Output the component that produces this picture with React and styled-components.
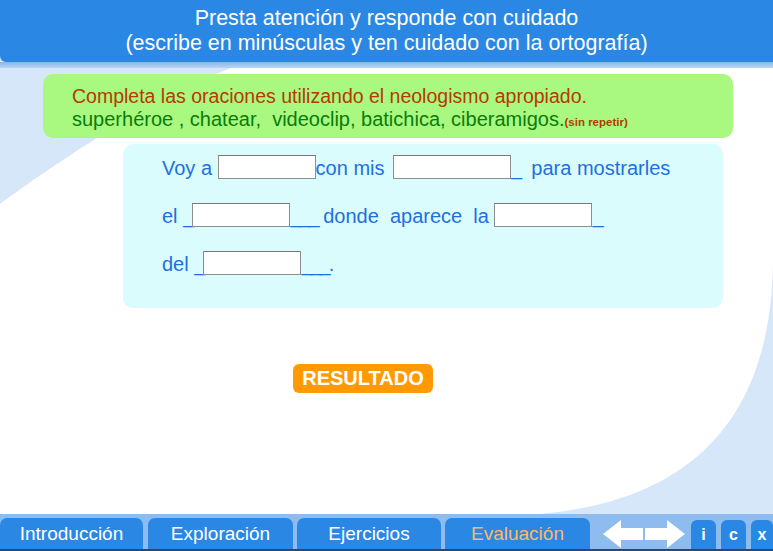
import React from 'react'
import styled, { createGlobalStyle } from 'styled-components'

const GlobalStyle = createGlobalStyle`
  html, body {
    margin: 0;
    padding: 0;
    background: #ffffff;
  }
  body {
    font-family: "Liberation Sans", Arial, sans-serif;
  }
`;

// white sheet shape drawn behind the exercise, light blue around it
const sheet = encodeURIComponent(
  '<svg xmlns="http://www.w3.org/2000/svg" width="773" height="446" viewBox="0 0 773 446">' +
  '<rect width="773" height="446" fill="#d6e7f9"/>' +
  '<path d="M231 0 L773 0 L773 180 C775 320 720 430 540 446 L0 446 L0 136 C60 92 150 32 231 0 Z" fill="#ffffff"/>' +
  '</svg>'
);

const Page = styled.div`
  width: 773px;
  height: 551px;
  display: flex;
  flex-direction: column;
  overflow: hidden;
  background: #d6e7f9;
`;

const Header = styled.div`
  height: 62px;
  box-sizing: border-box;
  padding-top: 6px;
  background: #2a87e4;
  border-bottom-left-radius: 6px;
  color: #ffffff;
  font-size: 21.5px;
  line-height: 25px;
  text-align: center;
`;

const Strip = styled.div`
  height: 6px;
  background: linear-gradient(#86b6ea, #b9d5f4);
`;

const Main = styled.div`
  flex: 1;
  display: flex;
  flex-direction: column;
  background: url("data:image/svg+xml,${sheet}") no-repeat 0 0;
`;

const Instructions = styled.div`
  margin: 6px 0 0 43px;
  width: 690px;
  height: 64px;
  box-sizing: border-box;
  padding: 11px 0 0 29px;
  background: #a9f87f;
  border-radius: 10px;
  font-size: 19.5px;
  line-height: 23px;
  white-space: pre;
`;

const Prompt = styled.div`
  color: #b53b00;
`;

const Words = styled.div`
  color: #087d08;
  font-size: 20px;
`;

const Note = styled.span`
  color: #b53b00;
  font-size: 11.5px;
  font-weight: bold;
`;

const Exercise = styled.div`
  margin: 6px 0 0 123px;
  width: 600px;
  height: 164px;
  box-sizing: border-box;
  padding: 0 0 0 39px;
  background: #dafcfd;
  border-radius: 10px;
  color: #1f6fdf;
  font-size: 20px;
`;

const Line = styled.div`
  height: 48px;
  display: flex;
  align-items: center;
  white-space: pre;
`;

const Under = styled.span`
  letter-spacing: -2px;
`;

const Blank = styled.input`
  width: ${p => p.$w || 98}px;
  height: 24px;
  box-sizing: border-box;
  margin: 0 0 3px ${p => p.$before || 0}px;
  padding: 0 3px;
  border: 1px solid #8d8d8d;
  border-top-color: #777777;
  background: #ffffff;
  font-size: 16px;
  font-family: "Liberation Sans", Arial, sans-serif;
`;

const Actions = styled.div`
  margin: 56px 0 0 293px;
`;

const ResultButton = styled.button`
  width: 140px;
  height: 29px;
  padding: 0;
  border: none;
  border-radius: 6px;
  background: #ff9a05;
  color: #ffffff;
  font-family: "Liberation Sans", Arial, sans-serif;
  font-size: 20px;
  font-weight: bold;
`;

const Nav = styled.div`
  height: 37px;
  box-sizing: border-box;
  padding-top: 4px;
  display: flex;
  align-items: stretch;
  background: #8ebcee;
  border-bottom: 2px solid #274a74;
`;

const Tab = styled.div`
  width: ${p => p.$w}px;
  margin-left: ${p => p.$gap || 0}px;
  display: flex;
  align-items: center;
  justify-content: center;
  background: #2a87e4;
  border-radius: 7px 7px 0 0;
  color: ${p => (p.$active ? '#ffb766' : '#ffffff')};
  font-size: 19px;
`;

const Arrows = styled.div`
  width: 101px;
  box-sizing: border-box;
  padding-left: 13px;
  display: flex;
  align-items: center;
`;

const Small = styled.div`
  width: ${p => p.$w || 25}px;
  margin: 2px 0 0 ${p => p.$gap || 0}px;
  display: flex;
  align-items: center;
  justify-content: center;
  background: #2a87e4;
  border-radius: 6px 6px 0 0;
  color: #ffffff;
  font-size: 16px;
  font-weight: bold;
`;

function ArrowPair() {
  return (
    <svg width="82" height="30" viewBox="0 0 82 30">
      <path d="M0 15 L18 1 L18 9 L40 9 L40 21 L18 21 L18 29 Z" fill="#ffffff" />
      <path d="M82 15 L64 1 L64 9 L42 9 L42 21 L64 21 L64 29 Z" fill="#ffffff" />
    </svg>
  )
}

export default function App() {
  return (
    <Page>
      <GlobalStyle />
      <Header>
        <div>Presta atención y responde con cuidado</div>
        <div>(escribe en minúsculas y ten cuidado con la ortografía)</div>
      </Header>
      <Strip />
      <Main>
        <Instructions>
          <Prompt>Completa las oraciones utilizando el neologismo apropiado.</Prompt>
          <Words>
            superhéroe , chatear,  videoclip, batichica, ciberamigos.<Note>(sin repetir)</Note>
          </Words>
        </Instructions>
        <Exercise>
          <Line>
            Voy a <Blank />con mis <Blank $w={118} $before={3} /><Under>_</Under>{'  para mostrarles'}
          </Line>
          <Line>
            el <Under>_</Under><Blank /><Under>___</Under> donde  aparece  la <Blank /><Under>_</Under>
          </Line>
          <Line>
            del <Under>_</Under><Blank /><Under>___</Under>.
          </Line>
        </Exercise>
        <Actions>
          <ResultButton>RESULTADO</ResultButton>
        </Actions>
      </Main>
      <Nav>
        <Tab $w={143}>Introducción</Tab>
        <Tab $w={145} $gap={5}>Exploración</Tab>
        <Tab $w={144} $gap={4}>Ejercicios</Tab>
        <Tab $w={145} $gap={4} $active>Evaluación</Tab>
        <Arrows>
          <ArrowPair />
        </Arrows>
        <Small>i</Small>
        <Small $gap={5}>c</Small>
        <Small $gap={5} $w={22}>x</Small>
      </Nav>
    </Page>
  )
}
